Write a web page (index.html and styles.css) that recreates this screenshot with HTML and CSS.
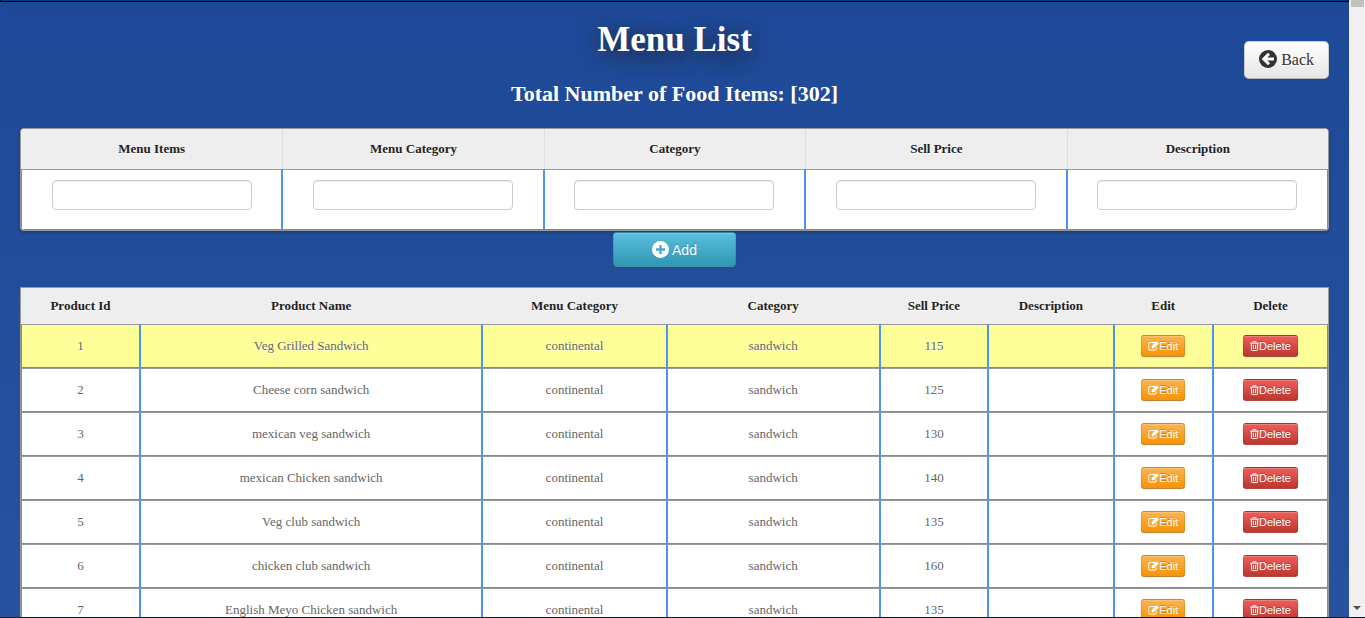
FILE: index.html
```html
<!DOCTYPE html>
<html lang="en">
<head>
    <meta charset="UTF-8">
    <meta name="viewport" content="width=device-width, initial-scale=1.0">
    <title>Menu List</title>
    <link rel="stylesheet" href="styles.css">
</head>
<body>

    <!-- shared icons -->
    <svg class="sprite" aria-hidden="true">
        <symbol id="icon-back" viewBox="0 0 18 18">
            <circle cx="9" cy="9" r="9" fill="#333"/>
            <path d="M10 3.8 4.8 9l5.2 5.2M5.4 9H15" fill="none" stroke="#fafafa" stroke-width="3"/>
        </symbol>
        <symbol id="icon-plus" viewBox="0 0 17 17">
            <path fill="#fff" fill-rule="evenodd" d="M8.5 0a8.5 8.5 0 1 0 0 17 8.5 8.5 0 0 0 0-17zM7.3 4h2.4v3.3H13v2.4H9.7V13H7.3V9.7H4V7.3h3.3z"/>
        </symbol>
        <symbol id="icon-edit" viewBox="0 0 11 10">
            <path d="M7 1.5H2A1.3 1.3 0 0 0 .7 2.8v5A1.3 1.3 0 0 0 2 9.1h5a1.3 1.3 0 0 0 1.3-1.3V6.5" fill="none" stroke="#fff" stroke-width="1"/>
            <path d="M3.6 5 8.5.2l2.3 2.3L6 7.3H3.6z" fill="#fff"/>
        </symbol>
        <symbol id="icon-trash" viewBox="0 0 9 10">
            <path d="M.2 2.2h8.6M3 2V.7h3V2M1.4 2.4v6.1q0 1 1 1h4.2q1 0 1-1V2.4M3.4 4v4M5.6 4v4" fill="none" stroke="#fff" stroke-width="1"/>
        </symbol>
    </svg>

    <div class="window">
        <div class="page">
            <nav class="topbar"></nav>

            <div class="content">
                <header class="header">
                    <div class="titles">
                        <h1>Menu List</h1>
                        <h3>Total Number of Food Items: [302]</h3>
                    </div>
                    <a href="#" class="btn btn-back"><svg><use href="#icon-back"/></svg>Back</a>
                </header>

                <form class="add-form">
                    <table class="add-table">
                        <thead>
                            <tr>
                                <th><label for="item">Menu Items</label></th>
                                <th><label for="menuCategory">Menu Category</label></th>
                                <th><label for="category">Category</label></th>
                                <th><label for="price">Sell Price</label></th>
                                <th><label for="description">Description</label></th>
                            </tr>
                        </thead>
                        <tbody>
                            <tr>
                                <td><input type="text" id="item"></td>
                                <td><input type="text" id="menuCategory"></td>
                                <td><input type="text" id="category"></td>
                                <td><input type="text" id="price"></td>
                                <td><input type="text" id="description"></td>
                            </tr>
                        </tbody>
                    </table>
                    <button type="button" class="btn btn-add"><svg><use href="#icon-plus"/></svg>Add</button>
                </form>

                <table class="menu-table">
                    <colgroup>
                        <col class="col-id">
                        <col class="col-name">
                        <col class="col-menu">
                        <col class="col-category">
                        <col class="col-price">
                        <col class="col-description">
                        <col class="col-edit">
                        <col class="col-delete">
                    </colgroup>
                    <thead>
                        <tr>
                            <th>Product Id</th>
                            <th>Product Name</th>
                            <th>Menu Category</th>
                            <th>Category</th>
                            <th>Sell Price</th>
                            <th>Description</th>
                            <th>Edit</th>
                            <th>Delete</th>
                        </tr>
                    </thead>
                    <tbody>
                        <tr class="active">
                            <td>1</td>
                            <td>Veg Grilled Sandwich</td>
                            <td>continental</td>
                            <td>sandwich</td>
                            <td>115</td>
                            <td></td>
                            <td><button class="btn btn-mini btn-edit"><svg><use href="#icon-edit"/></svg>Edit</button></td>
                            <td><button class="btn btn-mini btn-delete"><svg><use href="#icon-trash"/></svg>Delete</button></td>
                        </tr>
                        <tr>
                            <td>2</td>
                            <td>Cheese corn sandwich</td>
                            <td>continental</td>
                            <td>sandwich</td>
                            <td>125</td>
                            <td></td>
                            <td><button class="btn btn-mini btn-edit"><svg><use href="#icon-edit"/></svg>Edit</button></td>
                            <td><button class="btn btn-mini btn-delete"><svg><use href="#icon-trash"/></svg>Delete</button></td>
                        </tr>
                        <tr>
                            <td>3</td>
                            <td>mexican veg sandwich</td>
                            <td>continental</td>
                            <td>sandwich</td>
                            <td>130</td>
                            <td></td>
                            <td><button class="btn btn-mini btn-edit"><svg><use href="#icon-edit"/></svg>Edit</button></td>
                            <td><button class="btn btn-mini btn-delete"><svg><use href="#icon-trash"/></svg>Delete</button></td>
                        </tr>
                        <tr>
                            <td>4</td>
                            <td>mexican Chicken sandwich</td>
                            <td>continental</td>
                            <td>sandwich</td>
                            <td>140</td>
                            <td></td>
                            <td><button class="btn btn-mini btn-edit"><svg><use href="#icon-edit"/></svg>Edit</button></td>
                            <td><button class="btn btn-mini btn-delete"><svg><use href="#icon-trash"/></svg>Delete</button></td>
                        </tr>
                        <tr>
                            <td>5</td>
                            <td>Veg club sandwich</td>
                            <td>continental</td>
                            <td>sandwich</td>
                            <td>135</td>
                            <td></td>
                            <td><button class="btn btn-mini btn-edit"><svg><use href="#icon-edit"/></svg>Edit</button></td>
                            <td><button class="btn btn-mini btn-delete"><svg><use href="#icon-trash"/></svg>Delete</button></td>
                        </tr>
                        <tr>
                            <td>6</td>
                            <td>chicken club sandwich</td>
                            <td>continental</td>
                            <td>sandwich</td>
                            <td>160</td>
                            <td></td>
                            <td><button class="btn btn-mini btn-edit"><svg><use href="#icon-edit"/></svg>Edit</button></td>
                            <td><button class="btn btn-mini btn-delete"><svg><use href="#icon-trash"/></svg>Delete</button></td>
                        </tr>
                        <tr>
                            <td>7</td>
                            <td>English Meyo Chicken sandwich</td>
                            <td>continental</td>
                            <td>sandwich</td>
                            <td>135</td>
                            <td></td>
                            <td><button class="btn btn-mini btn-edit"><svg><use href="#icon-edit"/></svg>Edit</button></td>
                            <td><button class="btn btn-mini btn-delete"><svg><use href="#icon-trash"/></svg>Delete</button></td>
                        </tr>
                    </tbody>
                </table>
            </div>
        </div>

        <div class="scrollbar">
            <div class="thumb"></div>
            <div class="arrow"></div>
        </div>
    </div>

</body>
</html>
```

FILE: styles.css
```css
* {
    box-sizing: border-box;
}
body {
    margin: 0;
    font-family: "Liberation Serif", "Times New Roman", serif;
    font-size: 13px;
    line-height: 20px;
    color: #666;
}
.sprite {
    display: none;
}
.window {
    display: flex;
    height: 100vh;
    border-bottom: 1px solid #0b1a24;
}
.page {
    flex: 1;
    overflow-y: auto;
    scrollbar-width: none;
    background: linear-gradient(#1e4998, #27529e);
}
.topbar {
    height: 2px;
    background: #003a80;
    border: 1px solid #000;
    border-top: none;
    box-shadow: 0 1px 10px rgba(0, 0, 0, 0.1);
}
.content {
    padding: 0 20px 20px;
}

/* header */
.header {
    display: grid;
    grid-template-columns: 1fr auto 1fr;
    align-items: start;
    padding-top: 18px;
    height: 126px;
}
.titles {
    grid-column: 2;
    text-align: center;
    color: #fff;
}
h1 {
    margin: 0 0 14px;
    font-size: 35px;
    line-height: 40px;
    text-shadow: 0 5px 20px #222;
}
h3 {
    margin: 0;
    font-size: 22px;
    line-height: 40px;
}

/* buttons */
.btn {
    display: inline-flex;
    align-items: center;
    justify-content: center;
    border: 1px solid;
    border-color: rgba(0, 0, 0, 0.1) rgba(0, 0, 0, 0.1) rgba(0, 0, 0, 0.25);
    border-radius: 4px;
    box-shadow: inset 0 1px 0 rgba(255, 255, 255, 0.2), 0 1px 2px rgba(0, 0, 0, 0.05);
    font-family: "Liberation Sans", Arial, sans-serif;
    color: #fff;
    text-shadow: 0 -1px 0 rgba(0, 0, 0, 0.25);
    text-decoration: none;
    cursor: pointer;
}
.btn-back {
    justify-self: end;
    gap: 4px;
    height: 38px;
    margin-top: 21px;
    padding: 0 14px;
    border-color: #ccc #ccc #b3b3b3;
    border-radius: 5px;
    background: linear-gradient(#fff, #e6e6e6);
    font-family: "Liberation Serif", "Times New Roman", serif;
    font-size: 16px;
    color: #333;
    text-shadow: 0 1px 1px rgba(255, 255, 255, 0.75);
}
.btn-back svg {
    width: 18px;
    height: 18px;
    margin-bottom: 2px;
}
.btn-add {
    gap: 3px;
    width: 123px;
    height: 35px;
    background: linear-gradient(#5bc0de, #2f96b4);
    font-size: 14px;
}
.btn-add svg {
    width: 17px;
    height: 17px;
}
.btn-mini {
    height: 22px;
    padding: 0 6px;
    border-radius: 3px;
    font-size: 11px;
}
.btn-edit {
    background: linear-gradient(#fbb450, #f89406);
}
.btn-edit svg {
    width: 11px;
    height: 10px;
}
.btn-delete {
    background: linear-gradient(#ee5f5b, #bd362f);
}
.btn-delete svg {
    width: 9px;
    height: 10px;
}

/* tables */
table {
    width: 100%;
    table-layout: fixed;
    border: 1px solid #999;
    border-collapse: separate;
    border-spacing: 0;
    text-align: center;
    background: #fff;
}
th {
    padding: 0;
    background: #eee;
    color: #222;
    text-shadow: 0 1px 0 #fff;
}
td {
    padding: 0;
    border: 1px solid #4c94f0;
    border-top-color: #999;
    text-shadow: 0 1px 0 #fff;
}
.add-form {
    display: flex;
    flex-direction: column;
    align-items: center;
    gap: 1px;
    margin-bottom: 20px;
}
.add-table {
    border-radius: 4px;
    overflow: hidden;
    box-shadow: 0 2px 4px rgba(0, 0, 0, 0.2);
}
.add-table th {
    height: 40px;
}
.add-table th + th {
    border-left: 1px solid #ddd;
}
.add-table td {
    height: 61px;
    padding: 10px 20px 19px;
}
.add-table input {
    display: block;
    width: 200px;
    max-width: 100%;
    height: 30px;
    margin: 0 auto;
    padding: 4px 6px;
    border: 1px solid #ccc;
    border-radius: 4px;
    box-shadow: inset 0 1px 1px rgba(0, 0, 0, 0.075);
}
.menu-table th {
    height: 36px;
}
.menu-table td {
    height: 44px;
}
.menu-table .active td {
    background: #ff9;
}
.col-id { width: 9.1%; }
.col-name { width: 26.2%; }
.col-menu { width: 14.1%; }
.col-category { width: 16.3%; }
.col-price { width: 8.3%; }
.col-description { width: 9.6%; }
.col-edit { width: 7.6%; }
.col-delete { width: 8.8%; }

/* scrollbar */
.scrollbar {
    display: flex;
    flex-direction: column;
    justify-content: space-between;
    align-items: center;
    width: 16px;
    padding-bottom: 7px;
    background: #f0f0f0;
}
.thumb {
    width: 13px;
    height: 7px;
    background: #c1c1c1;
}
.arrow {
    border: 4px solid transparent;
    border-top-color: #505050;
    border-bottom: none;
}
```
